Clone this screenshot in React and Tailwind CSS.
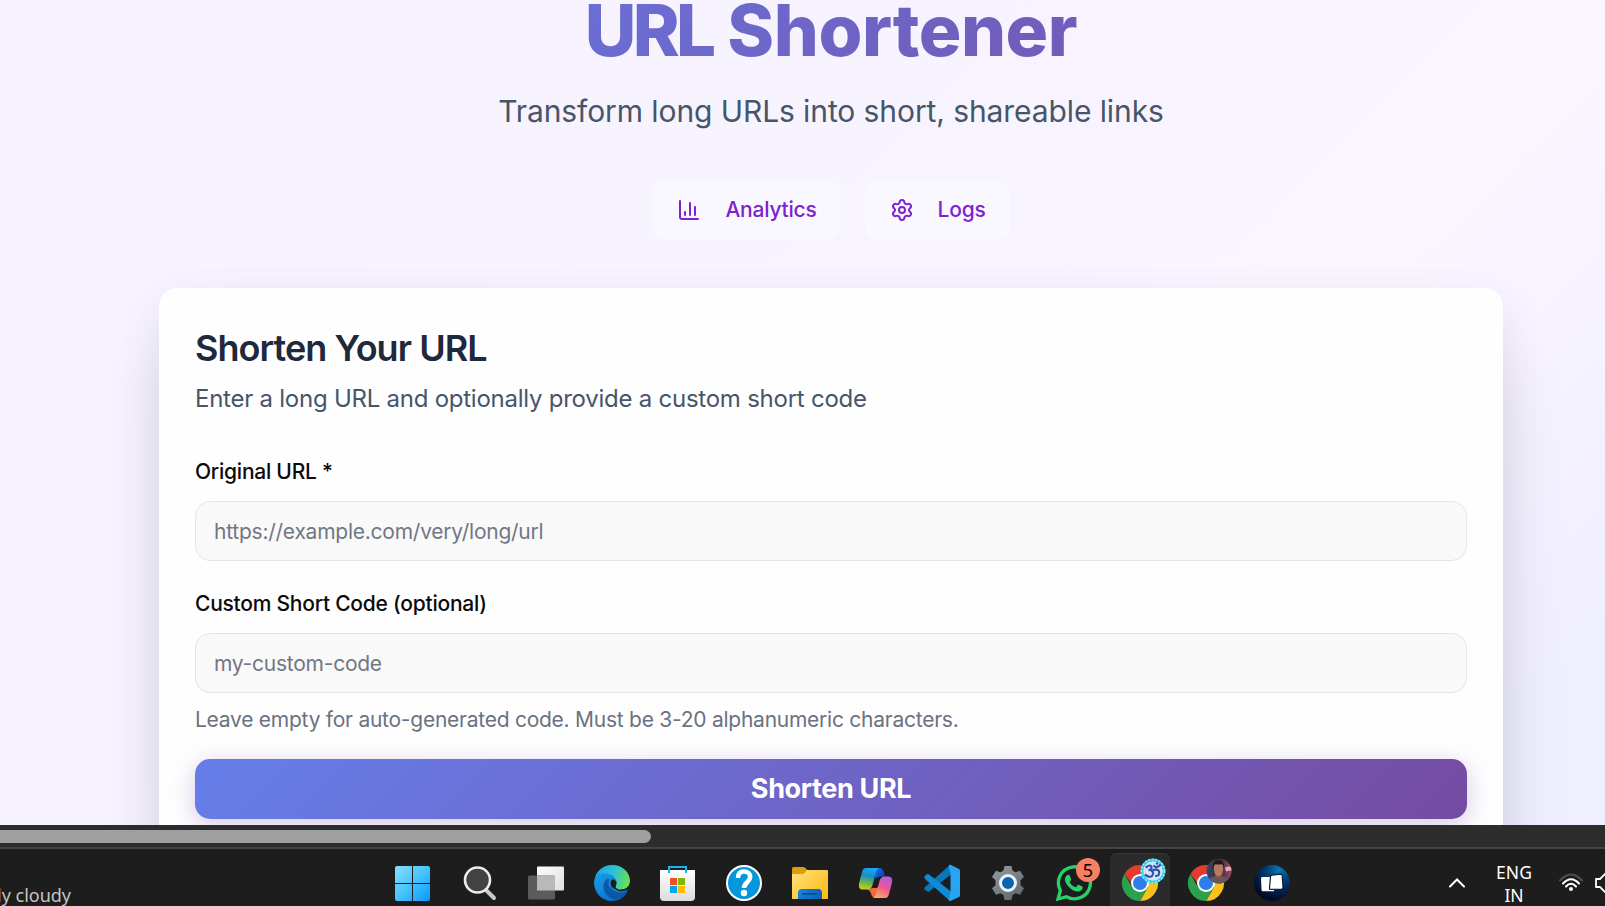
import React from "react";
import { ChartColumn, Settings } from "lucide-react";

const NavButton = ({ icon: Icon, label }) => (
  <button className="flex h-[60px] items-center rounded-[15px] border border-white/10 bg-white/35 pr-[23px] pl-6 text-[21px] font-medium tracking-[-0.22px] text-[#7e22ce]">
    <Icon size={24} strokeWidth={2} className="mr-6" />
    {label}
  </button>
);

const Field = ({ label, placeholder, className }) => (
  <div className={className}>
    <label className="block text-[21px] leading-[21px] font-medium tracking-[-0.24px] text-[#0a0a0a]">{label}</label>
    <input
      className="mt-[19px] block h-[60px] w-full rounded-[15px] border border-[#e4e5ea] bg-[#f9f9f9] px-[18px] text-[21px] tracking-[-0.24px] text-[#6b7280] placeholder:text-[#717784]"
      placeholder={placeholder}
    />
  </div>
);

const Icon36 = ({ children }) => (
  <svg className="overflow-visible" width="36" height="36" viewBox="0 0 36 36" fill="none">
    {children}
  </svg>
);

const WindowsIcon = () => (
  <Icon36>
    <defs>
      <linearGradient id="win" x1="0" y1="0" x2="36" y2="36" gradientUnits="userSpaceOnUse">
        <stop stopColor="#8be0ff" />
        <stop offset=".5" stopColor="#45c4fb" />
        <stop offset="1" stopColor="#0796fb" />
      </linearGradient>
    </defs>
    <path fill="url(#win)" d="M2 1h15v17H0V3q0-2 2-2ZM18 1h15q2 0 2 2v15H18ZM0 19h17v17H2q-2 0-2-2ZM18 19h17v15q0 2-2 2H18Z" transform="translate(-1 0)" />
  </Icon36>
);

const SearchIcon = () => (
  <Icon36>
    <path d="m25 26 7 7" stroke="#c9cacc" strokeWidth="4" strokeLinecap="round" />
    <circle cx="15.500" cy="15" r="12.500" fill="#424242" stroke="#ededed" strokeWidth="2.600" />
  </Icon36>
);

const TaskViewIcon = () => (
  <Icon36>
    <defs>
      <linearGradient id="tv" x1="9" y1="1" x2="36" y2="26" gradientUnits="userSpaceOnUse">
        <stop stopColor="#fff" />
        <stop offset="1" stopColor="#dedede" />
      </linearGradient>
    </defs>
    <rect x="9" y="1.500" width="27" height="24" rx="1" fill="url(#tv)" />
    <rect x="0" y="10.500" width="27" height="24" rx="1.500" fill="#5b5b5b" />
    <path d="M9 10.500h17q1 0 1 1v14H9Z" fill="#b9b9b9" />
  </Icon36>
);

const EdgeIcon = () => (
  <Icon36>
    <defs>
      <linearGradient id="e1" x1="3" y1="8" x2="35" y2="18" gradientUnits="userSpaceOnUse">
        <stop stopColor="#1ba5e8" />
        <stop offset=".5" stopColor="#2fc4d0" />
        <stop offset="1" stopColor="#6be24a" />
      </linearGradient>
      <linearGradient id="e2" x1="4" y1="12" x2="20" y2="35" gradientUnits="userSpaceOnUse">
        <stop stopColor="#1599e2" />
        <stop offset="1" stopColor="#0a6fd0" />
      </linearGradient>
    </defs>
    <path fill="url(#e2)" d="M0 17C1 10 7 7.500 12 8c7 .5 11 5 10.500 9-.5 3-3 4-1.500 6.500 3 4 10 3 13 .5C31 32 25 36 18 36 8 36 0 28 0 17Z" />
    <path fill="url(#e1)" d="M.2 16C1.500 6 9 0 18 0c11 0 18 8 18 15.500 0 6-4.500 9-9 9-4 0-5.500-1.500-5.500-2.500 0-1 1-1.500 1-4.500 0-5-5-9-11.500-9C6 8.500 1.500 11 .2 16Z" />
    <path fill="#0c57a6" d="M13 14c-4 3-5 10-.5 15.500C16 34 22 35.500 25.500 34.500c4-2 6.500-5 8-8.500-4 2.500-11 2.500-15.500-1.500C14 21.500 13.500 18 16 14.500Z" />
    <path fill="#1d1d1d" d="M16.500 18q0-3 2.500-3.800 3.300 1 3.300 3.800-.1 2-1 3.500 0 1.500 2 2.500-6 .5-6.800-6Z" />
  </Icon36>
);

const StoreIcon = () => (
  <Icon36>
    <defs>
      <linearGradient id="st" x1="0" y1="5" x2="0" y2="36" gradientUnits="userSpaceOnUse">
        <stop stopColor="#fff" />
        <stop offset="1" stopColor="#dcdcdc" />
      </linearGradient>
    </defs>
    <path d="M0 5h35v27q0 4-4 4H4q-4 0-4-4Z" fill="url(#st)" />
    <path d="M9 8V2h17v6" stroke="#1bb2ee" strokeWidth="2" />
    <path d="M10 13h7v7h-7Z" fill="#f25022" />
    <path d="M18 13h7v7h-7Z" fill="#7fba00" />
    <path d="M10 21h7v7h-7Z" fill="#00a4ef" />
    <path d="M18 21h7v7h-7Z" fill="#ffb900" />
  </Icon36>
);

const HelpIcon = () => (
  <Icon36>
    <circle cx="18" cy="18" r="17" fill="#0497dc" stroke="#fff" strokeWidth="2" />
    <path d="M12 13C12 8.500 14.500 6.500 18 6.500s6.200 2.200 6.200 5.500c0 5-6.200 5.500-6.200 11" stroke="#fff" strokeWidth="4.600" />
    <circle cx="18" cy="28" r="3.200" fill="#fff" />
  </Icon36>
);

const FolderIcon = () => (
  <Icon36>
    <defs>
      <linearGradient id="fo" x1="2" y1="6" x2="32" y2="36" gradientUnits="userSpaceOnUse">
        <stop stopColor="#ffe07a" />
        <stop offset="1" stopColor="#fdb913" />
      </linearGradient>
      <linearGradient id="fb" x1="6" y1="24" x2="30" y2="34" gradientUnits="userSpaceOnUse">
        <stop stopColor="#1586d8" />
        <stop offset="1" stopColor="#0860b8" />
      </linearGradient>
    </defs>
    <path d="M0 3.500Q0 2 1.500 2H12l3.500 3L13 9H0Z" fill="#dd9c0a" />
    <path d="M0 9h10q2 0 3-1.500L15 5h20q1 0 1 1v28H0Z" fill="url(#fo)" />
    <path d="M6 34v-6q0-4 4-4h16q4 0 4 4v6Z" fill="url(#fb)" />
    <path d="M11 29h14" stroke="#064b91" strokeWidth="1.600" strokeLinecap="round" />
  </Icon36>
);

const CopilotIcon = () => (
  <Icon36>
    <defs>
      <linearGradient id="c1" x1="12" y1="3" x2="7" y2="26" gradientUnits="userSpaceOnUse">
        <stop stopColor="#18a8f5" />
        <stop offset=".35" stopColor="#188fc2" />
        <stop offset=".7" stopColor="#79bd3b" />
        <stop offset="1" stopColor="#f7cc06" />
      </linearGradient>
      <linearGradient id="c2" x1="30" y1="10" x2="18" y2="33" gradientUnits="userSpaceOnUse">
        <stop stopColor="#a75df0" />
        <stop offset=".5" stopColor="#ee5790" />
        <stop offset="1" stopColor="#fcb45c" />
      </linearGradient>
      <linearGradient id="c3" x1="16" y1="3" x2="27" y2="12" gradientUnits="userSpaceOnUse">
        <stop stopColor="#1679e8" />
        <stop offset="1" stopColor="#1238b8" />
      </linearGradient>
    </defs>
    <path d="M15 3h6.500q3 0 4 3.500l1.500 5h-4q-4 0-5 4Z" fill="url(#c3)" />
    <path d="M9 24q3 1 4 4.500 1 4.500 5 4.500l3-11Z" fill="#f06a3c" />
    <path d="M8 3h13q-2 .5-3 4l-3.500 13q-1.300 4.500-5 4.500H4.500q-4.500 0-3.500-6L4 7q1-4 4-4Z" fill="url(#c1)" />
    <path d="M27.500 33H14q3 0 4-4l3.500-13q1.300-4.500 5-4.500h4q4.500 0 3.500 6L31 29q-1 4-3.500 4Z" fill="url(#c2)" />
    <path d="M18.500 12.500h4q-1 1-1.500 3l-2 7.500h-4q.8-1 1.200-2.500Z" fill="#1d1d1d" />
  </Icon36>
);

const CodeIcon = () => (
  <Icon36>
    <path d="M27 9.500 4.500 27 1 25q-1.500-1.300 0-3L26 0Z" fill="#0877b9" />
    <path d="M26 36 1 14q-1.500-1.800 0-3.300l2-1.500q1-.6 2 .2L27 26.500Z" fill="#0d8bd6" />
    <path d="m25 0 1.500-.2L35 4q1 .5 1 2v24q0 1.500-1 2l-8.500 4q-1.500 0-2-1l2-7.500V9L24.500 1Z" fill="#27a5f1" />
  </Icon36>
);

const GearIcon = () => (
  <Icon36>
    <defs>
      <linearGradient id="ge" x1="6" y1="2" x2="30" y2="34" gradientUnits="userSpaceOnUse">
        <stop stopColor="#909aa3" />
        <stop offset="1" stopColor="#5e666e" />
      </linearGradient>
    </defs>
    <path
      fill="url(#ge)"
      d="m14.500 1 7 0 1 4.500 3 1.700 4.500-1.400 4 6.200-3.500 3.200v5l3.500 3-4 6.500-4.500-1.400-3 1.700-1 5h-7l-1-5-3-1.700L6 29.700l-4-6.500 3.500-3v-5L2 12l4-6.200 4.500 1.400 3-1.700Z"
    />
    <circle cx="18" cy="18" r="7.500" fill="#0b63b5" stroke="#f2f3f5" strokeWidth="3" />
  </Icon36>
);

const WhatsAppIcon = () => (
  <Icon36>
    <path d="m2 34 2.400-8.500A16 16 0 1 1 10.500 31.700Z" stroke="#25d366" strokeWidth="3.300" strokeLinejoin="miter" />
    <path
      fill="#25d366"
      d="M12.500 9.800c-1 0-3.700 1.700-3.500 5 .3 5 7.500 11.800 12.800 11.800 3.500 0 5.200-2.500 4.900-4.500-.1-.6-3.800-2.300-4.500-2.300-.8 0-1.600 2.500-2.500 2.400-2-.3-5.700-3.600-6-5.300 0-.7 1.500-1.500 1.500-2.400 0-.6-1.400-4.300-1.900-4.600Z"
    />
  </Icon36>
);

const ChromeIcon = () => (
  <Icon36>
    <path d="M18 9h15.600A18 18 0 0 1 18 36l7.800-13.500Z" fill="#fcc21b" />
    <path d="M2.400 9A18 18 0 0 1 33.600 9H18L10 19Z" fill="#e33b2e" />
    <path d="m10.200 22.500L2.400 9A18 18 0 0 0 18 36l7.800-13.500Z" fill="#2da04e" />
    <circle cx="18" cy="18" r="9" fill="#fff" />
    <circle cx="18" cy="18" r="7" fill="#2f7de9" />
  </Icon36>
);

const CardsIcon = () => (
  <Icon36>
    <defs>
      <radialGradient id="cd" cx="25" cy="5" r="30" gradientUnits="userSpaceOnUse">
        <stop stopColor="#087ab5" />
        <stop offset=".4" stopColor="#063c76" />
        <stop offset="1" stopColor="#020a26" />
      </radialGradient>
    </defs>
    <circle cx="18" cy="18" r="18" fill="url(#cd)" />
    <path d="M8.500 12H16v12h4v2.300H9q-1.500 0-1.500-1.500L7 13.500Q7 12 8.500 12Z" fill="#fff" />
    <path
      d="m17.800 10.200 9-1q1.200 0 1.400 1.300l.8 12q0 1.500-1.300 1.600l-11 .3q-1.500 0-1.200-1.500l1-11.300q.2-1.300 1.300-1.400Z"
      fill="#fff"
      stroke="#062043"
      strokeWidth="1.200"
    />
  </Icon36>
);

const CountBadge = () => (
  <span className="absolute -top-[7px] left-5 flex h-6 w-6 items-center justify-center rounded-full bg-[#f77f63] font-['Noto_Sans',sans-serif] text-[18px] leading-none text-black">
    5
  </span>
);

const OmBadge = () => (
  <svg className="absolute -top-[7px] left-[18px]" width="26" height="26" viewBox="0 0 26 26" fill="none">
    <circle cx="13" cy="13" r="12.500" fill="#29c6e2" />
    <circle cx="13" cy="13" r="11.500" stroke="#9ff4f8" strokeWidth="1.500" strokeDasharray="2 1.500" />
    <circle cx="13" cy="13" r="9.800" fill="#d3e4f6" />
    <path d="M6.500 9q4-3 5 0 .3 3-3 3 5 0 4.500 4-1.500 5-7.500 1M12 13q4-3 7 0 1 5-3 5M14 8q3 2.500 6-1" stroke="#3152b5" strokeWidth="2.200" strokeLinecap="round" />
    <circle cx="17" cy="5.500" r="1.200" fill="#3152b5" />
  </svg>
);

const AvatarBadge = () => (
  <svg className="absolute -top-[7px] left-[18px]" width="26" height="26" viewBox="0 0 26 26" fill="none">
    <defs>
      <clipPath id="av">
        <circle cx="13" cy="13" r="12.500" />
      </clipPath>
      <linearGradient id="avbg" x1="0" y1="0" x2="26" y2="0" gradientUnits="userSpaceOnUse">
        <stop stopColor="#3c4866" />
        <stop offset=".5" stopColor="#34283a" />
        <stop offset="1" stopColor="#a04a6a" />
      </linearGradient>
    </defs>
    <g clipPath="url(#av)">
      <path d="M0 0h26v26H0Z" fill="url(#avbg)" />
      <path d="M19 9.500q4-2 7 0v3q-4 0-6 1Z" fill="#e6a7bb" />
      <path d="M2 26q0-7 7-8h7q7 1 8 8Z" fill="#6b5557" />
      <path d="M9.500 15h6v4l-3 2-3-2Z" fill="#8a5643" />
      <path d="M8 8q0-4 4.500-4T17 8v4q-.5 6-4.500 6T8 12Z" fill="#b67a60" />
      <path d="M7.300 10Q6 2.500 12.500 2 19 2.500 17.700 10q-.5-3-2-3.800-4 .8-6.500 0Q7.800 7.500 7.300 10Z" fill="#1f191e" />
    </g>
  </svg>
);

const apps = [
  { icon: WindowsIcon },
  { icon: SearchIcon },
  { icon: TaskViewIcon },
  { icon: EdgeIcon },
  { icon: StoreIcon },
  { icon: HelpIcon },
  { icon: FolderIcon },
  { icon: CopilotIcon },
  { icon: CodeIcon },
  { icon: GearIcon },
  { icon: WhatsAppIcon, badge: CountBadge },
  { icon: ChromeIcon, badge: OmBadge, active: true },
  { icon: ChromeIcon, badge: AvatarBadge },
  { icon: CardsIcon },
];

const Taskbar = () => (
  <footer className="flex h-[59px] shrink-0 overflow-hidden border-t-2 border-[#444] bg-[#1d1d1d] font-['Noto_Sans',sans-serif] text-white">
    <div className="w-[381px] shrink-0 pt-[34px] text-[18px] leading-6 text-[#c4c4c4]">
      <span className="-ml-[3px] inline-block whitespace-nowrap">ly cloudy</span>
    </div>
    {apps.map(({ icon: Icon, badge: Badge, active }, i) => (
      <div key={i} className="flex w-[66px] shrink-0 justify-center pt-1">
        <div
          className={
            active
              ? "flex h-[60px] w-[60px] justify-center rounded-t-md border-t border-[#363636] bg-[#2b2b2b] pt-[11px]"
              : "flex h-[60px] w-[60px] justify-center pt-3"
          }
        >
          <div className="relative h-9 w-9">
            <Icon />
            {Badge && <Badge />}
          </div>
        </div>
      </div>
    ))}
    <div className="flex w-[300px] shrink-0 pl-[144px]">
      <svg className="mt-[27px] shrink-0" width="16" height="13" viewBox="0 0 16 13" fill="none">
        <path d="m1 10.500 7-7 7 7" stroke="#fff" strokeWidth="2" strokeLinecap="round" />
      </svg>
      <div className="ml-8 w-[34px] shrink-0 pt-[12px] text-center text-[17.500px] leading-[23px] whitespace-nowrap">
        <div className="-mx-2">ENG</div>
        <div>IN</div>
      </div>
      <svg className="mt-[24px] ml-7 shrink-0" width="24" height="20" viewBox="0 0 24 20" fill="none" strokeLinecap="round">
        <path d="M1 7.500q11-12 22 0" stroke="#505050" strokeWidth="2" />
        <path d="M4 10.500q8-8.500 16 0M7 13.500q5-5.500 10 0" stroke="#fff" strokeWidth="2" />
        <circle cx="12" cy="16" r="2" fill="#fff" />
      </svg>
      <svg className="mt-[23px] ml-3 shrink-0" width="24" height="22" viewBox="0 0 24 22" fill="none">
        <path d="M1 7h4l6-6v20l-6-6H1Z" stroke="#fff" strokeWidth="1.800" strokeLinejoin="round" />
      </svg>
    </div>
  </footer>
);

export default function App() {
  return (
    <div className="flex h-[906px] w-[1605px] flex-col overflow-hidden font-['Inter',sans-serif]">
      <main className="h-[825px] shrink-0 overflow-hidden bg-[linear-gradient(135deg,#f6f3ff_0%,#f7f4ff_45%,#fbf5ff_68%,#f0efff_92%,#f0efff_100%)]">
        <div className="ml-[159px] w-[1344px]">
          <header className="flex h-[288px] flex-col items-center">
            <h1 className="-mt-[6px] w-full bg-[linear-gradient(135deg,#667eea_0%,#764ba2_100%)] bg-clip-text text-center text-[71px] leading-[72px] font-extrabold text-transparent">
              <span className="tracking-[-3.800px]">URL</span>
              <span className="tracking-[-0.450px]"> Shortener</span>
            </h1>
            <p className="mt-[24px] text-[30px] leading-[42px] tracking-[-0.090px] text-[#475569]">
              Transform long URLs into short, shareable links
            </p>
            <nav className="mt-[48px] flex gap-6">
              <NavButton icon={ChartColumn} label="Analytics" />
              <NavButton icon={Settings} label="Logs" />
            </nav>
          </header>

          <section className="h-[700px] rounded-[18px] bg-[#fefeff] px-9 pt-[42px] shadow-[0_38px_75px_-18px_rgba(0,0,0,0.18),0_12px_48px_rgba(30,10,60,0.05)]">
            <h2 className="text-[36px] leading-9 font-semibold tracking-[-0.950px] text-[#1e293b]">Shorten Your URL</h2>
            <p className="mt-[15px] text-[24px] leading-9 tracking-[-0.245px] text-[#475569]">
              Enter a long URL and optionally provide a custom short code
            </p>
            <Field className="mt-[44px]" label="Original URL *" placeholder="https://example.com/very/long/url" />
            <Field className="mt-8" label="Custom Short Code (optional)" placeholder="my-custom-code" />
            <p className="mt-3 text-[21px] leading-[30px] tracking-[-0.250px] text-[#6b7280]">
              Leave empty for auto-generated code. Must be 3-20 alphanumeric characters.
            </p>
            <button className="mt-6 h-[60px] w-full rounded-[15px] bg-[linear-gradient(135deg,#667eea_0%,#764ba2_100%)] text-[27px] font-[650] tracking-[-0.350px] text-white shadow-[0_6px_24px_rgba(118,75,162,0.3)]">
              Shorten URL
            </button>
          </section>
        </div>
      </main>
      <div className="h-[22px] shrink-0 bg-[#2c2c2c] pt-[5px]">
        <div className="h-[13px] w-[651px] rounded-r-full bg-[#9f9f9f]" />
      </div>
      <Taskbar />
    </div>
  );
}
